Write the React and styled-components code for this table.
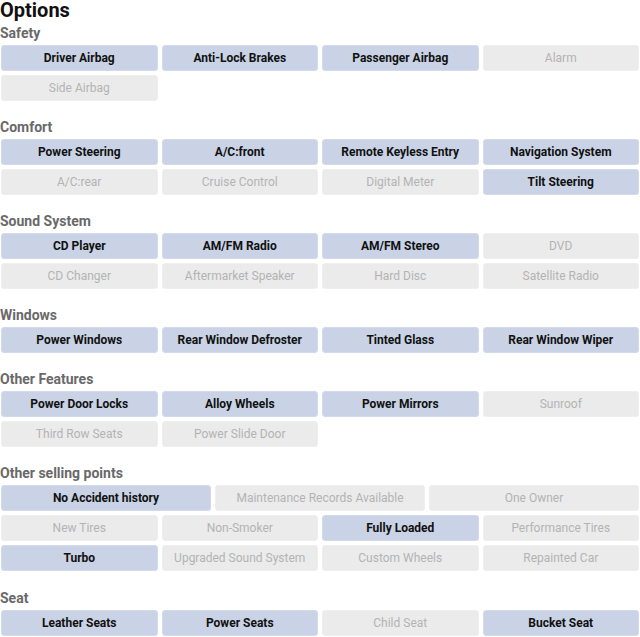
import React from "react";
import styled, { createGlobalStyle } from "styled-components";

const GlobalStyle = createGlobalStyle`
  body {
    margin: 0;
    background: #fff;
    font-family: Roboto, "Liberation Sans", Arial, sans-serif;
  }
`;

const Page = styled.div`
  width: 640px;
  padding-top: 1px;
`;

const Title = styled.h1`
  margin: -2px 0 -2px;
  font-size: 20px;
  line-height: 23px;
  font-weight: 700;
  color: #111;
`;

const Section = styled.section`
  margin-top: 18px;
  &:first-of-type {
    margin-top: 5px;
  }
  &:last-of-type {
    margin-top: 19px;
  }
`;

const Heading = styled.h2`
  margin: 0 0 3px;
  font-size: 14px;
  line-height: 17px;
  font-weight: 700;
  color: #696969;
`;

const Grid = styled.div`
  display: grid;
  grid-template-columns: repeat(12, 1fr);
  gap: 4px;
  padding: 0 1px;
`;

const Option = styled.div`
  grid-column: span ${({ span }) => span || 3};
  box-sizing: border-box;
  height: 26px;
  display: flex;
  align-items: center;
  justify-content: center;
  border-radius: 3px;
  font-size: 12px;
  white-space: nowrap;
  background: ${({ on }) => (on ? "#c9d3e5" : "#ebebec")};
  border: 1px solid ${({ on }) => (on ? "#d3dbea" : "#efeff0")};
  color: ${({ on }) => (on ? "#111" : "#b3b3b3")};
  font-weight: ${({ on }) => (on ? 700 : 400)};
`;

const sections = [
  {
    name: "Safety",
    items: [
      ["Driver Airbag", 1],
      ["Anti-Lock Brakes", 1],
      ["Passenger Airbag", 1],
      ["Alarm", 0],
      ["Side Airbag", 0],
    ],
  },
  {
    name: "Comfort",
    items: [
      ["Power Steering", 1],
      ["A/C:front", 1],
      ["Remote Keyless Entry", 1],
      ["Navigation System", 1],
      ["A/C:rear", 0],
      ["Cruise Control", 0],
      ["Digital Meter", 0],
      ["Tilt Steering", 1],
    ],
  },
  {
    name: "Sound System",
    items: [
      ["CD Player", 1],
      ["AM/FM Radio", 1],
      ["AM/FM Stereo", 1],
      ["DVD", 0],
      ["CD Changer", 0],
      ["Aftermarket Speaker", 0],
      ["Hard Disc", 0],
      ["Satellite Radio", 0],
    ],
  },
  {
    name: "Windows",
    items: [
      ["Power Windows", 1],
      ["Rear Window Defroster", 1],
      ["Tinted Glass", 1],
      ["Rear Window Wiper", 1],
    ],
  },
  {
    name: "Other Features",
    items: [
      ["Power Door Locks", 1],
      ["Alloy Wheels", 1],
      ["Power Mirrors", 1],
      ["Sunroof", 0],
      ["Third Row Seats", 0],
      ["Power Slide Door", 0],
    ],
  },
  {
    name: "Other selling points",
    items: [
      ["No Accident history", 1, 4],
      ["Maintenance Records Available", 0, 4],
      ["One Owner", 0, 4],
      ["New Tires", 0],
      ["Non-Smoker", 0],
      ["Fully Loaded", 1],
      ["Performance Tires", 0],
      ["Turbo", 1],
      ["Upgraded Sound System", 0],
      ["Custom Wheels", 0],
      ["Repainted Car", 0],
    ],
  },
  {
    name: "Seat",
    items: [
      ["Leather Seats", 1],
      ["Power Seats", 1],
      ["Child Seat", 0],
      ["Bucket Seat", 1],
    ],
  },
];

export default function App() {
  return (
    <Page>
      <GlobalStyle />
      <Title>Options</Title>
      {sections.map((s) => (
        <Section key={s.name}>
          <Heading>{s.name}</Heading>
          <Grid>
            {s.items.map(([label, on, span]) => (
              <Option key={label} on={on ? 1 : 0} span={span}>
                {label}
              </Option>
            ))}
          </Grid>
        </Section>
      ))}
    </Page>
  );
}
